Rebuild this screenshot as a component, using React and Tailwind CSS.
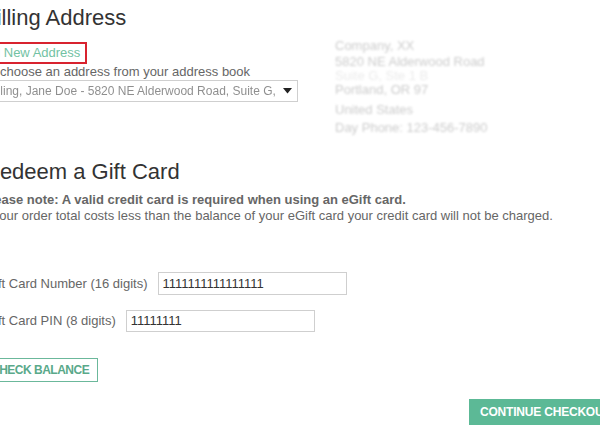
import React from "react";

export default function App() {
  return (
    <div
      className="w-[600px] h-[430px] overflow-hidden bg-white"
      style={{ fontFamily: '"Liberation Sans", Arial, sans-serif' }}
    >
      <div className="ml-[-18px] pt-[5px] w-[800px]">
        <h2 className="text-[22px] leading-[26px] text-[#333] font-normal">Billing Address</h2>
        <div className="flex mt-[9px]">
          <div className="w-[316px]">
            <div className="inline-block ml-[-11px] border-2 border-[#d8232f] pl-[4px] pr-[5px] h-[22px] text-[13px] leading-[18px] text-[#72c2a3]">
              Add New Address
            </div>
            <div className="text-[13px] leading-[16px] text-[#666]">
              Or choose an address from your address book
            </div>
            <div className="h-[22px] border border-[#cfcfcf] flex items-center pl-[4px] pr-[5px] justify-between">
              <span className="text-[12px] text-[#444] blur-[0.7px] opacity-60 whitespace-nowrap overflow-hidden">
                Billing, Jane Doe - 5820 NE Alderwood Road, Suite G, Portland
              </span>
              <svg width="9" height="6" viewBox="0 0 9 6" className="shrink-0 ml-[4px]">
                <path d="M0 0 L9 0 L4.5 5.5 Z" fill="#222" />
              </svg>
            </div>
          </div>
          <div className="ml-[37px] text-[13px] text-[#9a9a9a] blur-[0.9px] opacity-50 mt-[-2px]">
            <div className="leading-[16px]">Company, XX</div>
            <div className="leading-[16px]">5820 NE Alderwood Road</div>
            <div className="leading-[12px] text-[#d6d6d6]">Suite G, Ste 1 B</div>
            <div className="leading-[16px]">Portland, OR 97</div>
            <div className="leading-[16px] mt-[4px]">United States</div>
            <div className="leading-[16px] mt-[2px]">Day Phone: 123-456-7890</div>
          </div>
        </div>

        <h2 className="text-[22px] leading-[26px] text-[#333] font-normal mt-[23px] ml-[2px]">Redeem a Gift Card</h2>
        <div className="mt-[7px] text-[13px] leading-[16px] text-[#666]">
          <div className="font-bold">Please note: A valid credit card is required when using an eGift card.</div>
          <div>If your order total costs less than the balance of your eGift card your credit card will not be charged.</div>
        </div>

        <div className="mt-[48px] ml-[3px] flex items-center text-[13px] text-[#666]">
          <span>Gift Card Number (16 digits)</span>
          <div className="ml-[10px] w-[189px] h-[23px] border border-[#cfcfcf] flex items-center pl-[4px] text-[#333]">
            1111111111111111
          </div>
        </div>
        <div className="mt-[15px] ml-[3px] flex items-center text-[13px] text-[#666]">
          <span>Gift Card PIN (8 digits)</span>
          <div className="ml-[10px] w-[189px] h-[22px] border border-[#cfcfcf] flex items-center pl-[4px] text-[#333]">
            11111111
          </div>
        </div>

        <div className="mt-[25px] ml-[-2px]">
          <div className="inline-flex items-center h-[24px] border border-[#6bb89b] pl-[10px] pr-[8px] text-[12px] font-bold tracking-[-0.5px] text-[#5aa98a]">
            CHECK BALANCE
          </div>
        </div>

        <div className="mt-[17px] ml-[487px]">
          <div className="inline-flex items-center h-[26px] bg-[#5cb996] pl-[11px] pr-[11px] text-[12px] font-bold tracking-[-0.2px] text-white whitespace-nowrap">
            CONTINUE CHECKOUT
          </div>
        </div>
      </div>
    </div>
  );
}
